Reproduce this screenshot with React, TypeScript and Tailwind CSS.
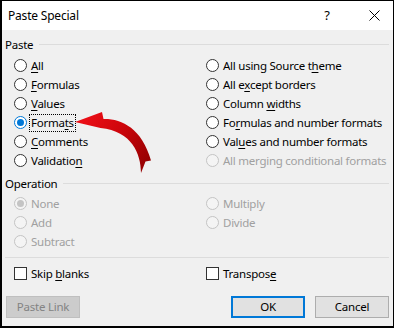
import React from "react";

type RadioState = "off" | "on" | "disabled" | "disabledOn";

function Radio({ state }: { state: RadioState }) {
  if (state === "on") {
    return (
      <span className="flex h-[13px] w-[13px] shrink-0 items-center justify-center rounded-full border border-[#0078d7] bg-white">
        <span className="h-[7px] w-[7px] rounded-full bg-[#0078d7]" />
      </span>
    );
  }
  if (state === "disabled" || state === "disabledOn") {
    return (
      <span className="flex h-[13px] w-[13px] shrink-0 items-center justify-center rounded-full border border-[#c4c4c4] bg-[#f4f4f4]">
        {state === "disabledOn" && <span className="h-[7px] w-[7px] rounded-full bg-[#c4c4c4]" />}
      </span>
    );
  }
  return <span className="h-[13px] w-[13px] shrink-0 rounded-full border border-[#333333] bg-white" />;
}

function Row({
  state = "off",
  children,
  focus = false,
}: {
  state?: RadioState;
  children: React.ReactNode;
  focus?: boolean;
}) {
  const disabled = state === "disabled" || state === "disabledOn";
  return (
    <div className="flex h-[19px] items-center gap-[2px] whitespace-nowrap">
      <Radio state={state} />
      <span
        className={
          (disabled ? "text-[#a0a0a0] " : "text-black ") +
          (focus
            ? "border border-dotted border-black px-[1px] leading-[16px]"
            : "border border-transparent px-[1px] leading-[16px]")
        }
      >
        {children}
      </span>
    </div>
  );
}

function U({ children }: { children: React.ReactNode }) {
  return <span className="underline decoration-1 underline-offset-[2px]">{children}</span>;
}

function Checkbox({ children }: { children: React.ReactNode }) {
  return (
    <div className="flex h-[19px] items-center gap-[2px] whitespace-nowrap">
      <span className="h-[13px] w-[13px] shrink-0 border border-[#333333] bg-white" />
      <span className="border border-transparent px-[1px] leading-[16px] text-black">{children}</span>
    </div>
  );
}

function Group({ label }: { label: string }) {
  return (
    <div className="flex h-[15px] items-center gap-[6px]">
      <span className="leading-[15px] text-black">{label}</span>
      <span className="h-px flex-1 bg-[#dcdcdc]" />
    </div>
  );
}

export default function App() {
  return (
    <div
      className="relative h-[328px] w-[394px] overflow-hidden border-b-2 border-l-2 border-r border-t border-black bg-[#f0f0f0] text-[11.5px] tracking-[-0.25px]"
      style={{ fontFamily: '"Noto Sans", "Open Sans", sans-serif' }}
    >
      {/* Title bar */}
      <div className="flex h-[29px] items-center bg-white pl-[6px] pr-[9px]">
        <span className="flex-1 text-[12px] tracking-[-0.2px] text-black">Paste Special</span>
        <span className="w-[20px] text-center text-[13px] text-black">?</span>
        <span className="ml-[27px] flex w-[20px] items-center justify-center">
          <svg width="11" height="11" viewBox="0 0 11 11">
            <path d="M0.5 0.5 L10.5 10.5 M10.5 0.5 L0.5 10.5" stroke="#000" strokeWidth="1" />
          </svg>
        </span>
      </div>

      <div className="flex flex-col pl-[3px] pr-[4px]">
        <div className="mt-[7px]">
          <Group label="Paste" />
        </div>
        <div className="mt-[4px] grid grid-cols-[192px_1fr] pl-[9px]">
          <div className="flex flex-col">
            <Row>
              <U>A</U>ll
            </Row>
            <Row>
              <U>F</U>ormulas
            </Row>
            <Row>
              <U>V</U>alues
            </Row>
            <Row state="on" focus>
              Forma<U>t</U>s
            </Row>
            <Row>
              <U>C</U>omments
            </Row>
            <Row>
              Validatio<U>n</U>
            </Row>
          </div>
          <div className="flex flex-col">
            <Row>
              All using Source t<U>h</U>eme
            </Row>
            <Row>
              All e<U>x</U>cept borders
            </Row>
            <Row>
              Column <U>w</U>idths
            </Row>
            <Row>
              Fo<U>r</U>mulas and number formats
            </Row>
            <Row>
              Val<U>u</U>es and number formats
            </Row>
            <Row state="disabled">All merging conditional formats</Row>
          </div>
        </div>

        <div className="mt-[6px]">
          <Group label="Operation" />
        </div>
        <div className="mt-[3px] grid grid-cols-[192px_1fr] pl-[9px]">
          <div className="flex flex-col">
            <Row state="disabledOn">None</Row>
            <Row state="disabled">Add</Row>
            <Row state="disabled">Subtract</Row>
          </div>
          <div className="flex flex-col">
            <Row state="disabled">Multiply</Row>
            <Row state="disabled">Divide</Row>
          </div>
        </div>

        <div className="mt-[6px] h-px bg-[#dcdcdc]" />

        <div className="mt-[6px] grid grid-cols-[192px_1fr] pl-[9px]">
          <Checkbox>
            Skip <U>b</U>lanks
          </Checkbox>
          <Checkbox>
            Transpos<U>e</U>
          </Checkbox>
        </div>

        <div className="mt-[13px] flex items-center pl-[1px]">
          <button className="h-[22px] w-[74px] border border-[#bfbfbf] bg-[#cccccc] text-[#838383]">
            Paste Link
          </button>
          <div className="flex-1" />
          <button className="h-[22px] w-[74px] border-2 border-[#0078d7] bg-[#e1e1e1] text-black">
            OK
          </button>
          <button className="ml-[10px] h-[22px] w-[74px] border border-[#adadad] bg-[#e1e1e1] text-black">
            Cancel
          </button>
        </div>
      </div>

      {/* Red annotation arrow */}
      <svg
        className="pointer-events-none absolute left-[-2px] top-[-1px]"
        width="394"
        height="328"
        viewBox="0 0 394 328"
      >
        <defs>
          <linearGradient id="arrowGrad" x1="76" y1="118" x2="150" y2="170" gradientUnits="userSpaceOnUse">
            <stop offset="0" stopColor="#f01018" />
            <stop offset="0.45" stopColor="#d0060c" />
            <stop offset="1" stopColor="#8e0000" />
          </linearGradient>
        </defs>
        <path
          d="M75 122 L102 112 L103.5 119 C121 118.5 142 128 151 160.5 L145.5 161.5 L141 173 C141 154 132 131 100.5 128 Z"
          fill="url(#arrowGrad)"
        />
      </svg>
    </div>
  );
}
